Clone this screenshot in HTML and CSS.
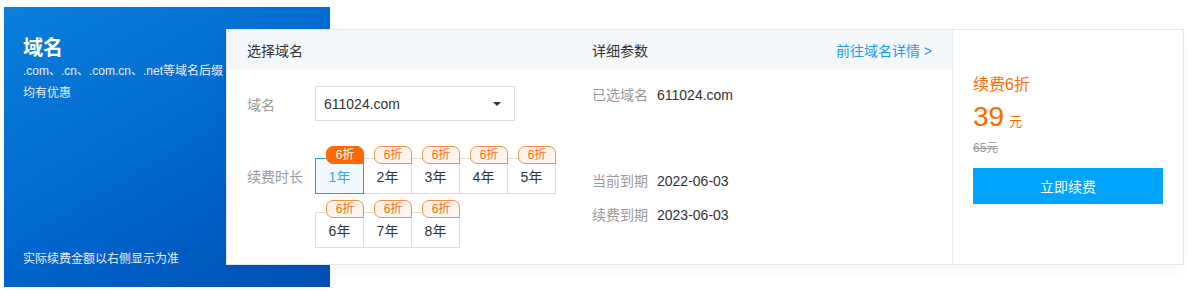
FILE: index.html
```html
<!DOCTYPE html>
<html lang="zh-CN">
<head>
    <meta charset="UTF-8">
    <meta name="viewport" content="width=device-width, initial-scale=1.0">
    <title>域名续费</title>
    <link rel="stylesheet" href="styles.css">
</head>
<body>
    <div class="stage">
        <div class="promo">
            <h1>域名</h1>
            <p class="promo__desc">.com、.cn、.com.cn、.net等域名后缀均有优惠</p>
            <p class="promo__note">实际续费金额以右侧显示为准</p>
        </div>

        <div class="card">
            <div class="card__main">
                <div class="col col_select">
                    <div class="col__head">选择域名</div>
                    <div class="col__body">
                        <div class="field">
                            <span class="field__label">域名</span>
                            <div class="select">
                                <span>611024.com</span>
                                <i class="select__arrow"></i>
                            </div>
                        </div>
                        <div class="field field_years">
                            <span class="field__label">续费时长</span>
                            <div class="years" id="years"></div>
                        </div>
                    </div>
                </div>

                <div class="col col_detail">
                    <div class="col__head">
                        <span>详细参数</span>
                        <a class="col__link" href="#">前往域名详情 &gt;</a>
                    </div>
                    <div class="col__body">
                        <div class="info">
                            <span class="info__label">已选域名</span>
                            <span class="info__value">611024.com</span>
                        </div>
                        <div class="info info_gap">
                            <span class="info__label">当前到期</span>
                            <span class="info__value">2022-06-03</span>
                        </div>
                        <div class="info">
                            <span class="info__label">续费到期</span>
                            <span class="info__value">2023-06-03</span>
                        </div>
                    </div>
                </div>
            </div>

            <div class="card__side">
                <div class="price__tag">续费6折</div>
                <div class="price__now">39<span class="price__unit">元</span></div>
                <div class="price__old">65元</div>
                <button class="btn">立即续费</button>
            </div>
        </div>
    </div>

    <script>
        const years = document.getElementById('years');

        for (let i = 1; i <= 8; i++) {
            const cell = document.createElement('div');
            cell.className = 'year' + (i === 1 ? ' year_active' : '');
            cell.innerHTML = `
                <span class="year__badge">6折</span>
                <div class="year__box">${i}年</div>
            `;
            years.appendChild(cell);
        }
    </script>
</body>
</html>
```

FILE: styles.css
```css
body {
    margin: 0;
    background: #fff;
    font-family: "Liberation Sans", "Noto Sans CJK SC", sans-serif;
    color: #333;
}

.stage {
    position: relative;
    padding: 7px 0 0 4px;
}

.promo {
    width: 326px;
    height: 280px;
    box-sizing: border-box;
    padding: 30px 0 0 19px;
    background: linear-gradient(150deg, #0a7fdc 0%, #0066cc 55%, #004fb4 100%);
    color: #fff;
    display: flex;
    flex-direction: column;
}

.promo h1 {
    margin: 0;
    font-size: 20px;
    line-height: 22px;
    font-weight: bold;
}

.promo__desc {
    margin: 1px 0 0;
    width: 206px;
    font-size: 12px;
    line-height: 22px;
    color: #e6effa;
}

.promo__note {
    margin: auto 0 18px;
    font-size: 12px;
    line-height: 20px;
    color: #e6effa;
}

.card {
    position: absolute;
    left: 226px;
    top: 29px;
    width: 958px;
    height: 236px;
    box-sizing: border-box;
    display: flex;
    background: #fff;
    border: 1px solid #e3e6ee;
    box-shadow: 0 6px 12px rgba(0, 0, 0, 0.04);
}

.card__main {
    display: flex;
    width: 725px;
}

.col__head {
    height: 40px;
    display: flex;
    align-items: center;
    justify-content: space-between;
    background: #f4f8fb;
    font-size: 14px;
    color: #333;
}

.col_select {
    width: 365px;
}

.col_select .col__head {
    padding-left: 20px;
}

.col_detail {
    flex: 1;
}

.col_detail .col__head {
    padding-right: 20px;
}

.col__link {
    color: #1b9af2;
    text-decoration: none;
    font-size: 14px;
}

.col_select .col__body {
    padding: 16px 0 0 20px;
}

.field {
    display: flex;
    align-items: center;
    font-size: 14px;
}

.field__label {
    width: 68px;
    color: #999;
}

.select {
    width: 200px;
    height: 35px;
    box-sizing: border-box;
    border: 1px solid #ddd;
    display: flex;
    align-items: center;
    justify-content: space-between;
    padding: 0 13px 0 8px;
    color: #333;
}

.select__arrow {
    width: 0;
    height: 0;
    border-left: 4px solid transparent;
    border-right: 4px solid transparent;
    border-top: 4px solid #333;
}

.field_years {
    margin-top: 25px;
    align-items: flex-start;
}

.field_years .field__label {
    margin-top: 21px;
    line-height: 20px;
}

.years {
    display: flex;
    flex-wrap: wrap;
    width: 250px;
    row-gap: 6px;
}

.year {
    position: relative;
    width: 49px;
    height: 48px;
    margin-right: -1px;
    padding-top: 12px;
    box-sizing: border-box;
}

.year__box {
    height: 36px;
    box-sizing: border-box;
    border: 1px solid #ddd;
    display: flex;
    align-items: center;
    justify-content: center;
    font-size: 14px;
    color: #333;
    background: #fff;
}

.year__badge {
    position: absolute;
    top: 0;
    right: 0;
    z-index: 2;
    width: 38px;
    height: 18px;
    box-sizing: border-box;
    border: 1px solid #ff8a3d;
    border-radius: 7px 7px 0 7px;
    background: #fff5ee;
    color: #ff6a00;
    font-size: 12px;
    line-height: 16px;
    text-align: center;
}

.year_active {
    z-index: 1;
}

.year_active .year__box {
    border-color: #1b9af0;
    background: #f2f9ff;
    color: #3aa0f2;
}

.year_active .year__badge {
    background: #ff6a00;
    border-color: #ff6a00;
    color: #fff;
}

.col_detail .col__body {
    padding-top: 15px;
}

.info {
    display: flex;
    font-size: 14px;
    line-height: 20px;
}

.info + .info {
    margin-top: 14px;
}

.info.info_gap {
    margin-top: 66px;
}

.info__label {
    width: 65px;
    color: #999;
}

.info__value {
    color: #333;
}

.card__side {
    flex: 1;
    border-left: 1px solid #e8eaf0;
    padding: 45px 20px 0;
}

.price__tag {
    font-size: 16px;
    line-height: 20px;
    color: #ff6a00;
}

.price__now {
    margin-top: 6px;
    font-size: 28px;
    line-height: 32px;
    color: #ff6a00;
}

.price__unit {
    margin-left: 5px;
    font-size: 13px;
}

.price__old {
    margin-top: 1px;
    font-size: 12px;
    line-height: 18px;
    color: #999;
    text-decoration: line-through;
}

.btn {
    margin-top: 11px;
    width: 190px;
    height: 36px;
    border: 0;
    background: #00a4ff;
    color: #fff;
    font-family: inherit;
    font-size: 14px;
    cursor: pointer;
}
```
